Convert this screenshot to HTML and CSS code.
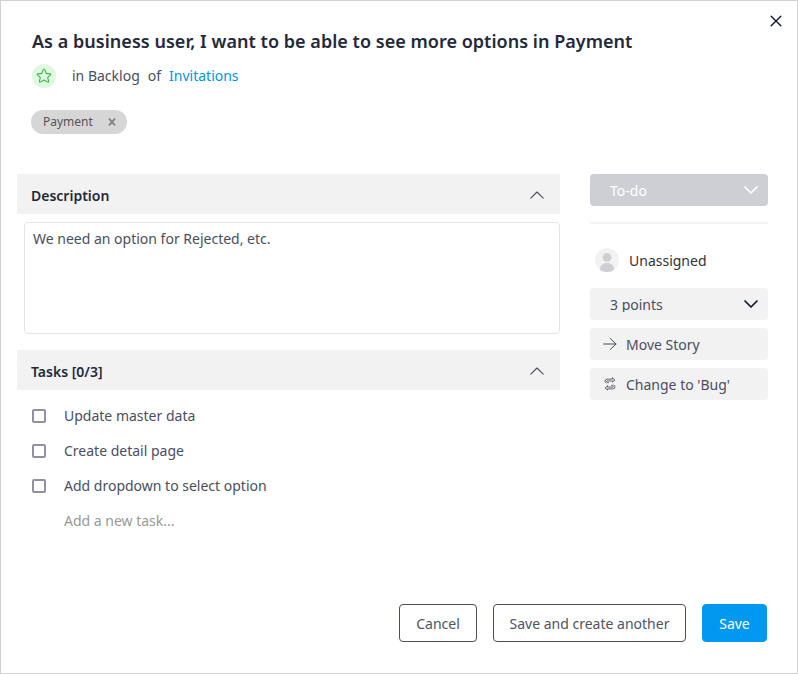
FILE: index.html
```html
<!DOCTYPE html>
<html lang="en">
<head>
<meta charset="utf-8">
<title>Edit story</title>
<link rel="stylesheet" href="styles.css">
</head>
<body>
<main class="dialog">
  <button class="close" aria-label="Close"><svg width="12" height="12" viewBox="0 0 12 12"><path d="M1.2 1.2l9.6 9.6M10.8 1.2L1.2 10.8"/></svg></button>
  <header class="header">
    <h1 class="title">As a business user, I want to be able to see more options in Payment</h1>
    <div class="context">
      <span class="story-type"><svg width="16" height="16" viewBox="0 0 16 16"><path d="M8 1.2Q8.5 1.2 8.8 1.9L10.2 5.2Q10.4 5.6 10.9 5.6L14.1 5.9Q15.2 6.1 14.5 6.9L12 9.1Q11.7 9.4 11.8 9.8L12.6 13.3Q12.6 14.5 11.7 14.1L8.5 12.2Q8 12 7.5 12.2L4.3 14.1Q3.4 14.5 3.4 13.3L4.2 9.8Q4.3 9.4 4 9.1L1.5 6.9Q.8 6.1 1.9 5.9L5.1 5.6Q5.6 5.6 5.8 5.2L7.2 1.9Q7.5 1.2 8 1.2Z"/></svg></span>
      <span class="place">in Backlog</span><span class="of">of</span><a class="link">Invitations</a>
    </div>
    <div class="tag"><span>Payment</span><svg width="8" height="8" viewBox="0 0 8 8"><path d="M1 .7l6 6.6M7 .7L1 7.3"/></svg></div>
  </header>
  <div class="columns">
    <div class="content">
      <section>
        <h2 class="section-head"><span>Description</span><svg class="caret" width="16" height="10" viewBox="0 0 16 10"><path d="M1.8 8.2L8 2l6.200 6.200"/></svg></h2>
        <div class="description">We need an option for Rejected, etc.</div>
      </section>
      <section>
        <h2 class="section-head"><span>Tasks [0/3]</span><svg class="caret" width="16" height="10" viewBox="0 0 16 10"><path d="M1.8 8.2L8 2l6.200 6.200"/></svg></h2>
        <ul class="tasks">
          <li><span class="box"></span>Update master data</li>
          <li><span class="box"></span>Create detail page</li>
          <li><span class="box"></span>Add dropdown to select option</li>
          <li class="new-task">Add a new task...</li>
        </ul>
      </section>
    </div>
    <aside class="sidebar">
      <div class="field status"><span>To-do</span><svg width="16" height="10" viewBox="0 0 16 10"><path d="M2 2l6 6 6-6"/></svg></div>
      <div class="assignee">
        <svg width="24" height="24" viewBox="0 0 24 24"><defs><clipPath id="round"><circle cx="12" cy="12" r="12"/></clipPath></defs><circle cx="12" cy="12" r="12" fill="#f2f2f2"/><g fill="#cecfd4" clip-path="url(#round)"><circle cx="12" cy="9.3" r="4.4"/><path d="M4.7 21.5C5.4 17.2 8 15 12 15s6.600 2.200 7.300 6.500V24H4.700Z"/></g></svg>
        <span>Unassigned</span>
      </div>
      <div class="field points"><span>3 points</span><svg width="16" height="10" viewBox="0 0 16 10"><path d="M2 2l6 6 6-6"/></svg></div>
      <div class="field action"><svg width="14" height="12" viewBox="0 0 14 12"><path d="M.5 6h12.500M7.200.5L13 6l-5.800 5.500"/></svg><span>Move Story</span></div>
      <div class="field action swap"><svg width="14" height="14" viewBox="0 0 14 14"><path d="M9.500 1L12 3 9.500 5V3.900H4.500Q3.700 3.900 3.700 4.700Q3.700 5.600 4.700 5.600H5.500M9.500 1V2.100H4Q2 2.300 2 4.200Q2 5.300 3 6M4.500 9L2 11 4.500 13V11.900H10Q12 11.700 12 9.800Q12 8.700 11 8M4.500 9V10.100H9.500Q10.300 10.100 10.300 9.300Q10.300 8.400 9.300 8.400H8.500"/></svg><span>Change to 'Bug'</span></div>
    </aside>
  </div>
  <footer class="footer">
    <button class="btn cancel">Cancel</button>
    <button class="btn another">Save and create another</button>
    <button class="btn save">Save</button>
  </footer>
</main>
</body>
</html>
```
FILE: styles.css
```css
* { box-sizing: border-box; }
body { margin: 0; background: #fff; color: #4a4e5f; font: 14px/20px "Noto Sans", sans-serif; }
button { font: inherit; }
svg { display: block; flex: none; fill: none; stroke-linecap: round; stroke-linejoin: round; }
.dialog { position: relative; display: flex; flex-direction: column; width: 798px; height: 674px; border: 1px solid #d2d2d2; padding: 27px 29px 31px 16px; }
.close { position: absolute; top: 14px; right: 15px; padding: 0; border: 0; background: none; }
.close svg { stroke: #0f1830; stroke-width: 1.4; }
.header { padding-left: 14px; height: 146px; }
.title { margin: 0 0 0 1px; color: #23293b; font-size: 18px; line-height: 26px; font-weight: 600; letter-spacing: .028px; }
.context { display: flex; align-items: center; height: 24px; margin: 10px 0 0 1px; }
.story-type { display: grid; place-items: center; width: 24px; height: 24px; border-radius: 50%; background: #e0f8e1; }
.story-type svg { stroke: #3db649; stroke-width: 1.1; }
.place { margin-left: 16px; }
.of { margin: 0 8px; }
.link { color: #0095e0; }
.tag { display: flex; align-items: center; justify-content: space-between; width: 96px; height: 24px; margin-top: 22px; padding: 0 11px 0 12px; border-radius: 12px; background: #d6d6d6; color: #555; font-size: 12px; }
.tag svg { stroke: #808080; stroke-width: 1.8; stroke-linecap: butt; }
.columns { display: flex; gap: 30px; }
.content { width: 543px; }
.section-head { display: flex; align-items: center; justify-content: space-between; height: 40px; margin: 0; padding: 4px 15px 0 14px; background: #f2f2f2; color: #23293b; font-size: 14px; font-weight: 600; }
.caret { margin-top: -2px; stroke: #4a4e5f; stroke-width: 1.1; }
.description { height: 112px; margin: 8px 0 16px 7px; padding: 6px 8px; border: 1px solid #e4e4e4; border-radius: 4px; }
.tasks { display: grid; gap: 15px; margin: 16px 0 0; padding: 0 0 0 15px; list-style: none; }
.tasks li { display: flex; align-items: center; gap: 18px; height: 20px; }
.box { width: 14px; height: 14px; border: 2px solid #9390a3; border-radius: 2px; }
.tasks .new-task { padding-left: 32px; color: #999; }
.sidebar { width: 178px; }
.field { display: flex; align-items: center; height: 32px; border-radius: 4px; background: #f2f2f2; }
.status, .points { justify-content: space-between; padding: 2px 9px 0 20px; }
.status svg, .points svg { margin-top: -3px; stroke-width: 1.7; }
.status { background: #cecfd4; color: #fff; }
.status svg { stroke: #fff; }
.points svg { stroke: #0f1830; }
.points span { height: 17px; margin-top: -3px; overflow: hidden; }
.assignee { display: flex; align-items: center; gap: 10px; height: 66px; margin-top: 16px; padding: 9px 5px 0; border-top: 2px solid #f2f2f2; color: #333; }
.assignee svg { margin-top: -2px; }
.action { gap: 9px; margin-top: 8px; padding: 2px 13px 0; }
.action svg { margin-top: -2px; stroke: #4a4e5f; stroke-width: 1; }
.swap svg { stroke-width: .85; }
.footer { display: flex; justify-content: flex-end; gap: 16px; margin-top: auto; padding-right: 1px; }
.btn { height: 38px; padding: 2px 0 0; border: 1px solid #4a4e5f; border-radius: 4px; background: #fff; color: #4f5363; }
.cancel { width: 78px; }
.another { width: 193px; }
.save { width: 65px; border-color: #0098f0; background: #0098f0; color: #fff; font-weight: 450; }
```
